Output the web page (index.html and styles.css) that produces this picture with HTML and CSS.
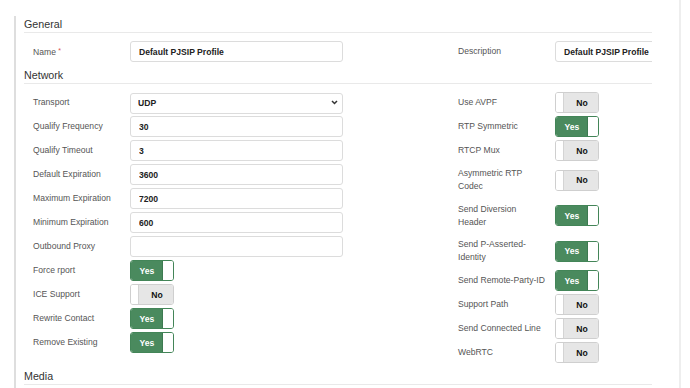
FILE: index.html
```html
<!DOCTYPE html>
<html lang="en">
<head>
<meta charset="utf-8">
<title>PJSIP Profile</title>
<link rel="stylesheet" href="styles.css">
</head>
<body>
<div class="page">
  <div class="panel">
    <div class="legend">General</div>
    <div class="rows">
      <div class="grid">
        <div class="col">
          <div class="field">
            <label class="lbl">Name <span class="req">*</span></label>
            <input class="ctrl" type="text" value="Default PJSIP Profile">
          </div>
        </div>
        <div class="col">
          <div class="field">
            <label class="lbl">Description</label>
            <input class="ctrl" type="text" value="Default PJSIP Profile">
          </div>
        </div>
      </div>
    </div>

    <div class="legend">Network</div>
    <div class="rows">
      <div class="grid">
        <div class="col">
          <div class="field">
            <label class="lbl">Transport</label>
            <div class="select-wrap">
              <select class="ctrl select"><option>UDP</option><option>TCP</option><option>TLS</option></select>
              <svg class="chev" width="7" height="5" viewBox="0 0 7 5"><path d="M1 1l2.5 2.5L6 1" fill="none" stroke="#333" stroke-width="1.5"/></svg>
            </div>
          </div>
          <div class="field"><label class="lbl">Qualify Frequency</label><input class="ctrl" type="text" value="30"></div>
          <div class="field"><label class="lbl">Qualify Timeout</label><input class="ctrl" type="text" value="3"></div>
          <div class="field"><label class="lbl">Default Expiration</label><input class="ctrl" type="text" value="3600"></div>
          <div class="field"><label class="lbl">Maximum Expiration</label><input class="ctrl" type="text" value="7200"></div>
          <div class="field"><label class="lbl">Minimum Expiration</label><input class="ctrl" type="text" value="600"></div>
          <div class="field"><label class="lbl">Outbound Proxy</label><input class="ctrl" type="text" value=""></div>
          <div class="field"><label class="lbl">Force rport</label><div class="toggle on"><span class="tg-text">Yes</span><span class="tg-knob"></span></div></div>
          <div class="field"><label class="lbl">ICE Support</label><div class="toggle off"><span class="tg-knob"></span><span class="tg-text">No</span></div></div>
          <div class="field"><label class="lbl">Rewrite Contact</label><div class="toggle on"><span class="tg-text">Yes</span><span class="tg-knob"></span></div></div>
          <div class="field"><label class="lbl">Remove Existing</label><div class="toggle on"><span class="tg-text">Yes</span><span class="tg-knob"></span></div></div>
        </div>
        <div class="col">
          <div class="field"><label class="lbl">Use AVPF</label><div class="toggle off"><span class="tg-knob"></span><span class="tg-text">No</span></div></div>
          <div class="field"><label class="lbl">RTP Symmetric</label><div class="toggle on"><span class="tg-text">Yes</span><span class="tg-knob"></span></div></div>
          <div class="field"><label class="lbl">RTCP Mux</label><div class="toggle off"><span class="tg-knob"></span><span class="tg-text">No</span></div></div>
          <div class="field"><label class="lbl">Asymmetric RTP<br>Codec</label><div class="toggle off"><span class="tg-knob"></span><span class="tg-text">No</span></div></div>
          <div class="field"><label class="lbl">Send Diversion<br>Header</label><div class="toggle on"><span class="tg-text">Yes</span><span class="tg-knob"></span></div></div>
          <div class="field"><label class="lbl">Send P-Asserted-<br>Identity</label><div class="toggle on"><span class="tg-text">Yes</span><span class="tg-knob"></span></div></div>
          <div class="field"><label class="lbl">Send Remote-Party-ID</label><div class="toggle on"><span class="tg-text">Yes</span><span class="tg-knob"></span></div></div>
          <div class="field"><label class="lbl">Support Path</label><div class="toggle off"><span class="tg-knob"></span><span class="tg-text">No</span></div></div>
          <div class="field"><label class="lbl">Send Connected Line</label><div class="toggle off"><span class="tg-knob"></span><span class="tg-text">No</span></div></div>
          <div class="field"><label class="lbl">WebRTC</label><div class="toggle off"><span class="tg-knob"></span><span class="tg-text">No</span></div></div>
        </div>
      </div>
    </div>

    <div class="legend">Media</div>
  </div>
</div>
</body>
</html>
```

FILE: styles.css
```css
html, body {
  margin: 0;
  padding: 0;
  background: #ffffff;
}

body {
  font-family: "Liberation Sans", Arial, sans-serif;
  color: #333333;
}

.page {
  width: 681px;
  height: 388px;
  box-sizing: border-box;
  padding-top: 16px;
  border-right: 2px solid #eeeeee;
  overflow: hidden;
}

.panel {
  margin-left: 14px;
  border-left: 2px solid #dedede;
  padding-left: 8px;
  width: 628px;
  min-height: 400px;
  overflow: hidden;
}

.legend {
  font-size: 10.7px;
  line-height: 13px;
  padding: 2px 0 1px;
  color: #333333;
  border-bottom: 1px solid #e9e9e9;
}

.rows {
  padding: 8px 0 2px;
}

.grid {
  display: grid;
  grid-template-columns: 425px 425px;
  width: 850px;
}

.col {
  display: flex;
  flex-direction: column;
}

.field {
  display: flex;
  align-items: center;
  padding-left: 9px;
  margin-bottom: 3px;
  min-height: 21px;
}

.lbl {
  width: 97px;
  flex: none;
  box-sizing: border-box;
  padding: 3px 6px 3px 0;
  font-size: 8.6px;
  line-height: 13.2px;
  color: #555555;
  white-space: nowrap;
}

.req {
  color: #d9534f;
  font-size: 7px;
  vertical-align: 2px;
}

.ctrl {
  width: 213px;
  height: 21px;
  box-sizing: border-box;
  margin: 0;
  padding: 0 8px;
  border: 1px solid #dcdcdc;
  border-radius: 3px;
  background: #ffffff;
  font-family: "Liberation Sans", Arial, sans-serif;
  font-size: 8.6px;
  font-weight: bold;
  color: #222222;
  outline: none;
}

.select-wrap {
  position: relative;
  width: 213px;
  height: 21px;
}

.select {
  -webkit-appearance: none;
  appearance: none;
  padding-left: 7px;
}

.chev {
  position: absolute;
  right: 5px;
  top: 8px;
}

.toggle {
  width: 44px;
  height: 21px;
  box-sizing: border-box;
  border: 1px solid #cccccc;
  border-radius: 3px;
  display: flex;
  overflow: hidden;
  font-size: 8.6px;
  font-weight: bold;
}

.tg-text {
  flex: 1;
  display: flex;
  align-items: center;
  justify-content: center;
}

.tg-knob {
  background: #ffffff;
  flex: none;
}

.toggle.on {
  border-color: #438558;
}

.toggle.on .tg-text {
  background: #4a8a5e;
  color: #ffffff;
  padding-left: 1px;
}

.toggle.on .tg-knob {
  width: 10px;
  border-left: 1px solid #3d7a51;
}

.toggle.off {
  border-color: #cfcfcf;
}

.toggle.off .tg-text {
  background: #e6e6e6;
  color: #111111;
  padding-left: 2px;
}

.toggle.off .tg-knob {
  width: 7px;
  border-right: 1px solid #d4d4d4;
}
```
